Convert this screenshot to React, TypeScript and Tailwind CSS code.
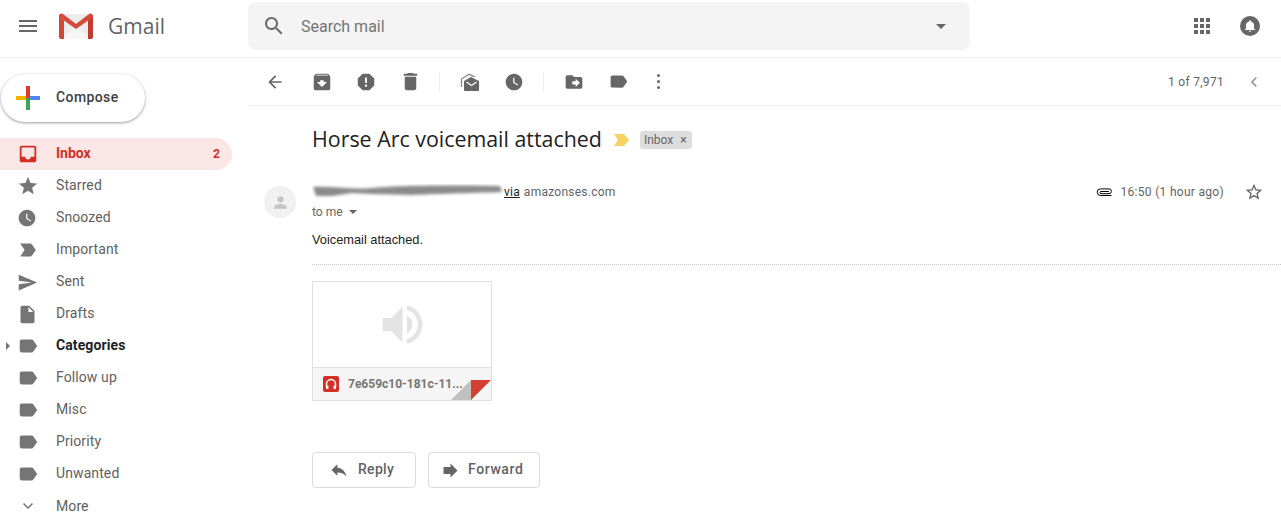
import React from "react";

const P = {
  menu: "M3 18h18v-2H3v2zm0-5h18v-2H3v2zm0-7v2h18V6H3z",
  inbox: "M19 3H4.99c-1.11 0-1.98.89-1.98 2L3 19c0 1.1.88 2 1.99 2H19c1.1 0 2-.9 2-2V5c0-1.11-.9-2-2-2zm0 12h-4c0 1.66-1.35 3-3 3s-3-1.34-3-3H4.99V5H19v10z",
  star: "M12 17.27L18.18 21l-1.64-7.03L22 9.24l-7.19-.61L12 2 9.19 8.63 2 9.24l5.46 4.73L5.82 21z",
  clock: "M12 2C6.5 2 2 6.5 2 12s4.5 10 10 10 10-4.5 10-10S17.5 2 12 2zm4.2 14.2L11 13V7h1.5v5.2l4.5 2.7-.8 1.3z",
  important: "M3.5 18.99l11 .01c.67 0 1.27-.33 1.63-.84L20.5 12l-4.37-6.16c-.36-.51-.96-.84-1.63-.84l-11 .01L8.34 12 3.5 18.99z",
  send: "M2.01 21L23 12 2.01 3 2 10l15 2-15 2z",
  draft: "M6 2c-1.1 0-1.99.9-1.99 2L4 20c0 1.1.89 2 1.99 2H18c1.1 0 2-.9 2-2V8l-6-6H6zm7 7V3.5L18.5 9H13z",
  label: "M17.63 5.84C17.27 5.33 16.67 5 16 5L5 5.01C3.9 5.01 3 5.9 3 7v10c0 1.1.9 1.99 2 1.99L16 19c.67 0 1.27-.33 1.63-.84L22 12l-4.37-6.16z",
  archive: "M20.54 5.23l-1.39-1.68C18.88 3.21 18.47 3 18 3H6c-.47 0-.88.21-1.16.55L3.46 5.23C3.17 5.57 3 6.02 3 6.5V19c0 1.1.9 2 2 2h14c1.1 0 2-.9 2-2V6.5c0-.48-.17-.93-.46-1.27zM12 17.5L6.5 12H10v-2h4v2h3.5L12 17.5zM5.12 5l.81-1h12l.94 1H5.12z",
  report: "M15.73 3H8.27L3 8.27v7.46L8.27 21h7.46L21 15.73V8.27L15.73 3zM12 17.3c-.72 0-1.3-.58-1.3-1.3 0-.72.58-1.3 1.3-1.3.72 0 1.3.58 1.3 1.3 0 .72-.58 1.3-1.3 1.3zm1-4.3h-2V7h2v6z",
  del: "M6 19c0 1.1.9 2 2 2h8c1.1 0 2-.9 2-2V7H6v12zM19 4h-3.5l-1-1h-5l-1 1H5v2h14V4z",
  move: "M20 6h-8l-2-2H4c-1.1 0-1.99.9-1.99 2L2 18c0 1.1.9 2 2 2h16c1.1 0 2-.9 2-2V8c0-1.1-.9-2-2-2zm-6 12v-3h-4v-4h4V8l5 5-5 5z",
  reply: "M10 9V5l-7 7 7 7v-4.1c5 0 8.5 1.6 11 5.1-1-5-4-10-11-11z",
  forward: "M12 8V4l8 8-8 8v-4H4V8z",
  back: "M20 11H7.83l5.59-5.59L12 4l-8 8 8 8 1.41-1.41L7.83 13H20v-2z",
  search: "M15.5 14h-.79l-.28-.27C15.41 12.59 16 11.11 16 9.5 16 5.91 13.09 3 9.5 3S3 5.91 3 9.5 5.91 16 9.5 16c1.61 0 3.09-.59 4.23-1.57l.27.28v.79l5 4.99L20.49 19l-4.99-5zm-6 0C7.01 14 5 11.99 5 9.5S7.01 5 9.5 5 14 7.01 14 9.5 11.99 14 9.5 14z",
  starO: "M22 9.24l-7.19-.62L12 2 9.19 8.63 2 9.24l5.46 4.73L5.82 21 12 17.27 18.18 21l-1.63-7.03L22 9.24zM12 15.4l-3.76 2.27 1-4.28-3.32-2.88 4.38-.38L12 6.1l1.71 4.04 4.38.38-3.32 2.88 1 4.28L12 15.4z",
  chevL: "M15.41 7.41L14 6l-6 6 6 6 1.41-1.41L10.83 12z",
  speaker: "M3 9v6h4l5 5V4L7 9H3zm13.5 3c0-1.77-1.02-3.29-2.5-4.03v8.05c1.48-.73 2.5-2.25 2.5-4.02zM14 3.23v2.06c2.89.86 5 3.54 5 6.71s-2.11 5.85-5 6.71v2.06c4.01-.91 7-4.49 7-8.77s-2.99-7.86-7-8.77z",
  person: "M12 12c2.21 0 4-1.79 4-4s-1.79-4-4-4-4 1.79-4 4 1.79 4 4 4zm0 2c-2.67 0-8 1.34-8 4v2h16v-2c0-2.66-5.33-4-8-4z",
};

function Icon({ d, size = 21, className = "fill-[#757575]" }: { d: string; size?: number; className?: string }) {
  return (
    <svg viewBox="0 0 24 24" width={size} height={size} className={`shrink-0 ${className}`}>
      <path d={d} />
    </svg>
  );
}

function Row({ d, label, bold, caret, size }: { d?: string; label: string; bold?: boolean; caret?: boolean; size?: number }) {
  return (
    <div className="relative flex h-8 items-center pr-3">
      {caret && <div className="absolute left-[6px] top-[12px] h-0 w-0 border-y-[4px] border-l-[4px] border-y-transparent border-l-[#757575]" />}
      <div className="flex w-14 justify-start pl-[17px]">
        {d ? (
          <Icon d={d} size={size ?? 22} />
        ) : (
          <svg width="22" height="22" viewBox="0 0 22 22" className="fill-none stroke-[#757575] stroke-[1.5]">
            <path d="M6.500 8.500 11 13l4.500-4.500" />
          </svg>
        )}
      </div>
      <span className={`${d ? "mb-[2px]" : ""} text-[14px] leading-5 tracking-[0.1px] ${bold ? "font-bold text-[#202124]" : "text-[#5f5f5f]"}`}>{label}</span>
    </div>
  );
}

function Tool({ children, w = 44 }: { children: React.ReactNode; w?: number }) {
  return (
    <div className="flex h-full items-center justify-center" style={{ width: w }}>
      {children}
    </div>
  );
}

function Sep() {
  return <div className="h-5 w-px bg-[#eeeeee]" />;
}

export default function App() {
  return (
    <div className="h-[519px] w-[1281px] overflow-hidden bg-white [font-family:Roboto,sans-serif]">
      {/* top bar */}
      <header className="flex h-[58px] items-center border-b border-[#eeeeee] pb-[5px]">
        <div className="flex w-[248px] items-center pl-4">
          <Icon d={P.menu} size={24} className="fill-[#666666]" />
          <svg width="36" height="26" viewBox="0 0 36 26" className="ml-[18px]">
            <path d="M2 1h32l1 1v22l-2 2H3l-2-2V2z" fill="#ececec" />
            <path d="M3 26h30L18 13z" fill="#f5f5f5" />
            <path d="M1 3c0-2 2-3 4-2l13 10L31 1c2-1 4 0 4 2v1L18 16 1 4z" fill="#d64a3c" />
            <path d="M1 3.500 6 7.500V26H3c-1 0-2-1-2-2z" fill="#d14836" />
            <path d="M35 3.500 30 7.500V26h3c1 0 2-1 2-2z" fill="#c23b2c" />
          </svg>
          <span className="ml-[14px] text-[21px] leading-none text-[#5f6368] [font-family:'Open_Sans',sans-serif]">Gmail</span>
        </div>
        <div className="flex h-12 w-[722px] items-center rounded-lg bg-[#f4f4f4] pl-[14px] pr-[24px]">
          <Icon d={P.search} size={24} className="fill-[#6b6b6b]" />
          <span className="ml-[15px] mt-[2px] flex-1 text-[16px] text-[#757575]">Search mail</span>
          <div className="h-0 w-0 border-x-[5px] border-t-[5px] border-x-transparent border-t-[#666666]" />
        </div>
        <div className="flex flex-1 items-center justify-end pr-[21px]">
          <div className="grid grid-cols-3 gap-[2px]">
            {[0, 1, 2, 3, 4, 5, 6, 7, 8].map((i) => (
              <div key={i} className="h-1 w-1 bg-[#666666]" />
            ))}
          </div>
          <div className="ml-[30px] flex h-5 w-5 items-center justify-center rounded-full bg-[#666666]">
            <svg width="14" height="14" viewBox="0 0 24 24" className="fill-white">
              <path d="M12 22c1.100 0 2-.9 2-2h-4c0 1.100.9 2 2 2zm7-5v-6c0-3.300-2-6-5.500-6.800V3.500a1.500 1.500 0 0 0-3 0v.7C7 5 5 7.700 5 11v6l-2 1v1h18v-1z" />
            </svg>
          </div>
        </div>
      </header>

      <div className="flex">
        {/* sidebar */}
        <aside className="w-[248px] shrink-0">
          <div className="ml-px mt-4 flex h-12 w-[144px] items-center rounded-full bg-white shadow-[0_1px_3px_rgba(0,0,0,0.4)]">
            <svg width="24" height="24" viewBox="0 0 24 24" className="ml-[15px]">
              <rect x="10" y="0" width="4" height="12" fill="#e0392e" />
              <rect x="14" y="10" width="10" height="4" fill="#4d85f2" />
              <rect x="10" y="12" width="4" height="12" fill="#3fa45b" />
              <rect x="0" y="10" width="10" height="4" fill="#f4b400" />
            </svg>
            <span className="mb-[2px] ml-[16px] text-[14px] font-medium tracking-[0.4px] text-[#3c4043]">Compose</span>
          </div>
          <nav className="mt-4">
            <div className="flex h-8 w-[232px] items-center rounded-r-full bg-[#f9e6e5] pr-3">
              <div className="w-14 pl-[17px]">
                <Icon d={P.inbox} size={22} className="fill-[#d42f25]" />
              </div>
              <span className="mb-[2px] flex-1 text-[14px] font-bold text-[#d42f25]">Inbox</span>
              <span className="text-[12px] font-bold text-[#d42f25]">2</span>
            </div>
            <Row d={P.star} label="Starred" />
            <Row d={P.clock} label="Snoozed" size={20} />
            <Row d={P.important} label="Important" />
            <Row d={P.send} label="Sent" size={21} />
            <Row d={P.draft} label="Drafts" size={21} />
            <Row d={P.label} label="Categories" bold caret size={22} />
            <Row d={P.label} label="Follow up" size={22} />
            <Row d={P.label} label="Misc" size={22} />
            <Row d={P.label} label="Priority" size={22} />
            <Row d={P.label} label="Unwanted" size={22} />
            <Row label="More" />
          </nav>
        </aside>

        {/* main */}
        <main className="flex-1">
          <div className="flex h-12 items-center border-b border-[#eeeeee]">
            <Tool w={54}><Icon d={P.back} size={20} className="fill-[#666666]" /></Tool>
            <Tool w={40}><Icon d={P.archive} size={22} className="fill-[#666666]" /></Tool>
            <Tool w={48}><Icon d={P.report} size={22} className="fill-[#666666]" /></Tool>
            <Tool w={40}><Icon d={P.del} size={23} className="fill-[#666666]" /></Tool>
            <div className="w-[9px]" />
            <Sep />
            <Tool w={60}>
              <svg width="20" height="20" viewBox="0 0 20 20">
                <path d="M1.500 15V7L9 2.300 15 5" fill="none" stroke="#888" strokeWidth="1.300" />
                <path d="M4 9 11 5l8 4v9a1 1 0 0 1-1 1H5a1 1 0 0 1-1-1z" fill="#666" />
                <path d="M6.500 10 11.500 13.500 16.500 10" fill="none" stroke="#fff" strokeWidth="1.400" />
              </svg>
            </Tool>
            <Tool w={28}><Icon d={P.clock} size={20} className="fill-[#666666]" /></Tool>
            <div className="w-[15px]" />
            <Sep />
            <Tool w={60}><Icon d={P.move} size={20} className="fill-[#666666]" /></Tool>
            <Tool w={28}><Icon d={P.label} size={21} className="fill-[#666666]" /></Tool>
            <div className="flex w-[52px] flex-col items-center gap-[3px]">
              <div className="h-[3px] w-[3px] rounded-full bg-[#666666]" />
              <div className="h-[3px] w-[3px] rounded-full bg-[#666666]" />
              <div className="h-[3px] w-[3px] rounded-full bg-[#666666]" />
            </div>
            <div className="flex flex-1 items-center justify-end pr-[17px]">
              <span className="text-[12px] tracking-[0.3px] text-[#5f6368]">1 of 7,971</span>
              <div className="ml-[20px]"><Icon d={P.chevL} size={20} className="fill-[#9a9a9a]" /></div>
            </div>
          </div>

          <div className="flex items-center pl-16 pt-[17px]">
            <h1 className="text-[21.400px] leading-[32px] text-[#202124] [font-family:'Open_Sans',sans-serif]">Horse Arc voicemail attached</h1>
            <svg width="18" height="14" viewBox="0 0 18 14" className="ml-[11px] mt-[1px]">
              <path d="M1 1h10l5 6-5 6H1l4-6z" fill="#f6d365" />
            </svg>
            <div className="ml-[9px] mt-[2px] flex h-[18px] items-center gap-[7px] rounded-[3px] bg-[#dddddd] pl-[4px] pr-[5px] text-[12px] text-[#666666]">
              Inbox
              <span className="text-[12px] leading-none">×</span>
            </div>
          </div>

          <div className="mt-[30px] flex pl-4 pr-[17px]">
            <div className="mt-[1px] flex h-8 w-8 shrink-0 items-center justify-center rounded-full border border-[#eeeeee] bg-[#f1f1f1]">
              <Icon d={P.person} size={19} className="fill-[#c4c4c4]" />
            </div>
            <div className="ml-4 flex-1">
              <div className="flex h-[14px] items-center text-[12px] text-[#5f6368]">
                <svg width="192" height="16" viewBox="0 0 192 16" className="shrink-0">
                  <defs><filter id="b" x="-5%" y="-50%" width="110%" height="200%"><feGaussianBlur stdDeviation="1.500" /></filter></defs>
                  <path d="M1 3C20 2 40 6 60 4S120 1 188 2L190 8C160 9 120 10 100 11L60 10 40 9 20 12 4 12z" fill="#8a8a8a" filter="url(#b)" />
                </svg>
                <span className="tracking-[0.2px] text-[#222222] underline">via</span>
                <span className="ml-[4px] tracking-[0.25px]">amazonses.com</span>
                <div className="flex flex-1 items-center justify-end">
                  <svg width="17" height="9" viewBox="0 0 17 9" className="fill-none stroke-black stroke-[1]">
                    <path d="M15.500 7.500H4.500a3.300 3.300 0 0 1 0-6.600H13a2.400 2.400 0 0 1 0 4.800H5a1 1 0 0 1 0-2.200H13" />
                  </svg>
                  <span className="ml-[8px] tracking-[0.3px] text-[#5f6368]">16:50 (1 hour ago)</span>
                  <div className="ml-[20px]"><Icon d={P.starO} size={20} className="fill-[#666666]" /></div>
                </div>
              </div>
              <div className="mt-[6px] flex items-center text-[12px] leading-[14px] text-[#666666]">
                to me
                <div className="ml-[6px] h-0 w-0 border-x-[4px] border-t-[4px] border-x-transparent border-t-[#666666]" />
              </div>
              <p className="mt-[14px] text-[12.800px] leading-[14px] text-[#222222] [font-family:'Liberation_Sans',sans-serif]">Voicemail attached.</p>
              <div className="-mr-[17px] mt-[17px] border-t border-dotted border-[#c8c8c8]" />
              <div className="relative mt-4 h-[120px] w-[180px] border border-[#e0e0e0]">
                <div className="flex h-[86px] items-center justify-center border-b border-[#e0e0e0] bg-white">
                  <Icon d={P.speaker} size={53} className="fill-[#e3e3e3]" />
                </div>
                <div className="flex h-[32px] items-center bg-[#f5f5f5] pl-[10px]">
                  <div className="flex h-4 w-4 items-center justify-center rounded-[2px] bg-[#d42f25]">
                    <svg width="12" height="12" viewBox="0 0 12 12" className="fill-none stroke-white stroke-[1.5]">
                      <path d="M1.500 9V6a4.500 4.500 0 0 1 9 0v3" />
                      <path d="M2.200 7.500v3.500M9.800 7.500v3.500" strokeWidth="2.400" />
                    </svg>
                  </div>
                  <span className="ml-[9px] text-[12px] font-bold text-[#757575]">7e659c10-181c-11...</span>
                </div>
                <svg width="40" height="20" viewBox="0 0 40 20" className="absolute bottom-0 right-0">
                  <path d="M20 0V20H0z" fill="#c0c0c0" />
                  <path d="M20 0H40L20 20z" fill="#d14032" />
                </svg>
              </div>
              <div className="mt-[51px] flex gap-3">
                <button className="flex h-9 w-[104px] items-center rounded border border-[#dadce0] pl-[16px] text-[14px] font-medium tracking-[0.3px] text-[#5f6368]">
                  <Icon d={P.reply} size={20} className="fill-[#666666]" />
                  <span className="mb-[2px] ml-[9px]">Reply</span>
                </button>
                <button className="flex h-9 w-[112px] items-center rounded border border-[#dadce0] pl-[11px] text-[14px] font-medium tracking-[0.6px] text-[#5f6368]">
                  <Icon d={P.forward} size={21} className="fill-[#666666]" />
                  <span className="mb-[2px] ml-[7px]">Forward</span>
                </button>
              </div>
            </div>
          </div>
        </main>
      </div>
    </div>
  );
}
